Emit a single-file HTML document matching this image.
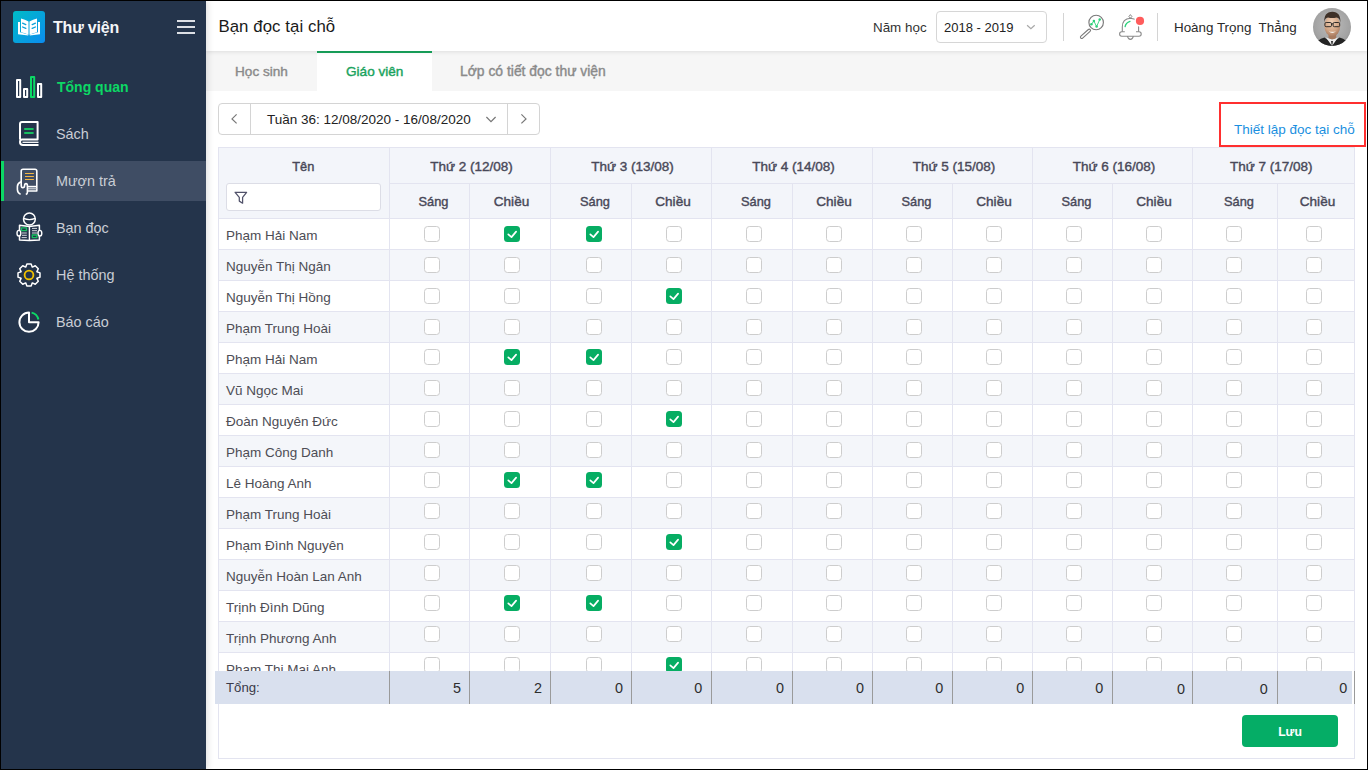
<!DOCTYPE html>
<html><head><meta charset="utf-8"><style>
html,body{margin:0;padding:0;width:1368px;height:770px;overflow:hidden;background:#fff;font-family:"Liberation Sans", sans-serif;}
.t{position:absolute;white-space:nowrap;}
.r{position:absolute;}
.a{position:absolute;overflow:visible;}
</style></head><body>
<div class="r" style="left:0px;top:0px;width:206px;height:770px;background:#24344b;box-shadow:2px 0 6px rgba(0,0,0,0.12);z-index:2;"></div><div style="position:absolute;left:0;top:0;width:206px;height:770px;z-index:3"><svg class="a" style="left:13px;top:11px" width="32" height="32" viewBox="0 0 32 32">
<defs><linearGradient id="lg" x1="0" y1="0" x2="1" y2="1"><stop offset="0" stop-color="#00bcc6"/><stop offset="1" stop-color="#0b8cf0"/></linearGradient></defs>
<rect width="32" height="32" rx="3" fill="url(#lg)"/>
<path d="M5 11 H7 V21.3 L15.2 23.6 V24.6 L5 23.2 Z" fill="#fff"/>
<path d="M27 11 H25 V21.3 L16.8 23.6 V24.6 L27 23.2 Z" fill="#fff"/>
<path d="M8 7.6 Q12 8.4 15.5 10.6 V23.8 Q12 21.8 8 21.2 Z" fill="#fff"/>
<path d="M24 7.6 Q20 8.4 16.5 10.6 V23.8 Q20 21.8 24 21.2 Z" fill="#fff"/>
<path d="M9.6 12.2 L12.8 13.6 M9.6 16 L12.8 17.4 M22.4 12.2 L19.2 13.6 M22.4 16 L19.2 17.4" stroke="#0aa0d8" stroke-width="1.3" stroke-linecap="round"/>
</svg><div class="t" style="top:20.00px;font-size:16px;line-height:16px;font-weight:700;color:#f4f6f8;letter-spacing:-0.2px;left:53px;">Thư viện</div><div class="r" style="left:177px;top:20px;width:18px;height:2px;background:#dcdfe4;"></div><div class="r" style="left:177px;top:26px;width:18px;height:2px;background:#dcdfe4;"></div><div class="r" style="left:177px;top:32px;width:18px;height:2px;background:#dcdfe4;"></div><div class="r" style="left:1px;top:161px;width:205px;height:40px;background:#3f4d64;"></div><div class="r" style="left:1px;top:161px;width:3px;height:40px;background:#0cd865;"></div><svg class="a" style="left:0;top:60px" width="60" height="290" viewBox="0 60 60 290" fill="none" stroke-linejoin="round">
<!-- chart -->
<rect x="17" y="80" width="3.2" height="17" stroke="#fff" stroke-width="2"/>
<rect x="24" y="89" width="3.2" height="8" stroke="#fff" stroke-width="2"/>
<rect x="31" y="77" width="3.2" height="20" stroke="#0cd865" stroke-width="2"/>
<rect x="38" y="84" width="3.2" height="13" stroke="#fff" stroke-width="2"/>
<!-- book -->
<path d="M20 139.5 V124 Q20 122 22 122 H37.6 V139.5 H22 Q20 139.5 20 142 Q20 145 23 145 H38.5" stroke="#fff" stroke-width="2"/>
<path d="M22.5 142.3 H38.5" stroke="#fff" stroke-width="1.3"/>
<path d="M24.2 129 H33.6 M24.2 133 H33.6" stroke="#16c060" stroke-width="2"/>
<!-- borrow -->
<path d="M21.2 185 V171 Q21.2 169.2 23 169.2 H35 Q36.8 169.2 36.8 171 V191 H27.2" stroke="#fff" stroke-width="1.6"/>
<path d="M27 186.6 H36.8" stroke="#fff" stroke-width="1.6"/>
<path d="M27 188.8 H36.8" stroke="#d8dce2" stroke-width="1.2"/>
<path d="M21.2 185 Q21.2 187.8 22.8 187.8 Q24.6 187.8 24.6 185.6 Q24.6 183.6 26 183.6 Q27.4 183.6 27.4 185.6 V192.4 Q27.4 194 25.8 194.4" stroke="#fff" stroke-width="1.6"/>
<path d="M21 181.8 Q17.4 183.5 17.4 186.5 V189.8 Q17.6 193 20.6 194.4" stroke="#fff" stroke-width="1.6"/>
<path d="M25 173.5 H33.9 M25 176.5 H33.9 M25 179.5 H33.9" stroke="#f2b544" stroke-width="1.2"/>
<!-- reader -->
<circle cx="29.4" cy="219" r="5.9" stroke="#fff" stroke-width="1.5"/>
<path d="M23.6 218.4 Q26.5 219.6 29.4 219.6 Q32.3 219.6 35.2 218.4" stroke="#fff" stroke-width="1.4"/>
<path d="M19.5 225.3 L29.4 226.5 L39.4 225.3 V240 L29.4 240.4 L19.5 240 Z" fill="#24344b" stroke="#fff" stroke-width="1.5"/>
<path d="M29.4 226.5 V240.2" stroke="#fff" stroke-width="1.4"/>
<ellipse cx="18.9" cy="233.2" rx="1.9" ry="2.8" fill="#24344b" stroke="#fff" stroke-width="1.4"/>
<ellipse cx="39.9" cy="233.2" rx="1.9" ry="2.8" fill="#24344b" stroke="#fff" stroke-width="1.4"/>
<rect x="21.5" y="227.8" width="5" height="2.8" stroke="#16c060" stroke-width="1.3"/>
<rect x="32.3" y="235" width="4.6" height="2.6" stroke="#16c060" stroke-width="1.3"/>
<path d="M22 233 H26.8 M22 235.3 H26.8 M21.6 237.6 H26.8 M32 228.4 H37 M32 230.7 H37 M32 233 H37" stroke="#e6e8ec" stroke-width="0.9"/>
<!-- gear -->
<path id="gear" stroke="#fff" stroke-width="1.5" stroke-linejoin="round" d="M25.78 267.03 L26.86 264.01 L31.14 264.01 L32.22 267.03 L32.36 267.08 L35.26 265.71 L38.29 268.74 L36.92 271.64 L36.97 271.78 L39.99 272.86 L39.99 277.14 L36.97 278.22 L36.92 278.36 L38.29 281.26 L35.26 284.29 L32.36 282.92 L32.22 282.97 L31.14 285.99 L26.86 285.99 L25.78 282.97 L25.64 282.92 L22.74 284.29 L19.71 281.26 L21.08 278.36 L21.03 278.22 L18.01 277.14 L18.01 272.86 L21.03 271.78 L21.08 271.64 L19.71 268.74 L22.74 265.71 L25.64 267.08 Z"/>
<circle cx="29" cy="275" r="4.4" stroke="#f2c200" stroke-width="1.8"/>
<!-- pie -->
<path d="M29 312.6 A9.6 9.6 0 1 0 38.6 322.2 H29 Z" stroke="#fff" stroke-width="2"/>
<path d="M31.6 312.6 A9.2 9.2 0 0 1 38.4 319.4" stroke="#0cd865" stroke-width="2"/>
</svg><div class="t" style="top:80.00px;font-size:14px;line-height:14px;font-weight:700;color:#0cd865;left:57px;">Tổng quan</div><div class="t" style="top:127.00px;font-size:14.4px;line-height:14.4px;font-weight:400;color:#c9cdd5;left:56px;">Sách</div><div class="t" style="top:174.00px;font-size:14.4px;line-height:14.4px;font-weight:400;color:#c9cdd5;left:56px;">Mượn trả</div><div class="t" style="top:221.00px;font-size:14.4px;line-height:14.4px;font-weight:400;color:#c9cdd5;left:56px;">Bạn đọc</div><div class="t" style="top:268.00px;font-size:14.4px;line-height:14.4px;font-weight:400;color:#c9cdd5;left:56px;">Hệ thống</div><div class="t" style="top:315.00px;font-size:14.4px;line-height:14.4px;font-weight:400;color:#c9cdd5;left:56px;">Báo cáo</div></div><div class="r" style="left:206px;top:0px;width:1162px;height:51px;background:#ffffff;box-shadow:0 1px 4px rgba(0,0,0,0.10);z-index:1;"></div><div style="position:absolute;left:0;top:0;width:1368px;height:51px;z-index:1"><div class="t" style="top:19.00px;font-size:16.8px;line-height:16.8px;font-weight:400;color:#1a1a1a;letter-spacing:0.08px;left:218.4px;">Bạn đọc tại chỗ</div><div class="t" style="top:21.00px;font-size:13.4px;line-height:13.4px;font-weight:400;color:#333;left:873px;">Năm học</div><div class="r" style="left:936px;top:11px;width:111px;height:32px;background:#fff;box-sizing:border-box;border:1px solid #d6d6d6;border-radius:4px;"></div><div class="t" style="top:21.00px;font-size:13px;line-height:13px;font-weight:400;color:#222;left:944px;">2018 - 2019</div><svg class="a" style="left:1024px;top:22px" width="12" height="10" viewBox="0 0 12 10"><path d="M3.1 3.3 L6.9 6.7 L10.7 3.3" stroke="#a8a8a8" stroke-width="1.2" fill="none"/></svg><div class="r" style="left:1063px;top:13px;width:1px;height:28px;background:#d4d4d4;"></div><div class="r" style="left:1157px;top:13px;width:1px;height:28px;background:#d4d4d4;"></div><svg class="a" style="left:1076px;top:8px" width="30" height="34" viewBox="1076 8 30 34" fill="none">
<circle cx="1096.15" cy="22.46" r="7.25" stroke="#7a7a7a" stroke-width="1.15"/>
<rect x="-6.3" y="-1.3" width="12.6" height="2.6" rx="1.3" transform="translate(1085.5 33.8) rotate(-42)" stroke="#7a7a7a" stroke-width="1.1"/>
<path d="M1091.4 24.3 L1093.9 21 L1096.6 26.6 L1099.7 19.6" stroke="#2fd27c" stroke-width="0.9" stroke-linejoin="round"/>
<circle cx="1091.4" cy="24.3" r="1.25" fill="#2bd078"/><circle cx="1093.9" cy="21" r="1.25" fill="#2bd078"/><circle cx="1096.6" cy="26.6" r="1.25" fill="#2bd078"/><circle cx="1099.7" cy="19.6" r="1.25" fill="#2bd078"/>
</svg><svg class="a" style="left:1116px;top:10px" width="32" height="32" viewBox="1116 10 32 32" fill="none" stroke-linejoin="round">
<path d="M1122.3 31.8 V27 Q1122.3 18.6 1130.4 18.2 Q1138.6 18.6 1138.6 27 V31.8" stroke="#8a8a8a" stroke-width="1.1"/>
<path d="M1124.8 31.8 H1121.8 Q1119.6 31.8 1119.6 34 Q1119.6 36.2 1121.8 36.2 H1139 Q1141.2 36.2 1141.2 34 Q1141.2 31.8 1139 31.8 H1136" stroke="#8a8a8a" stroke-width="1.1"/>
<path d="M1127.4 36.2 Q1128.2 39.4 1130.4 39.4 Q1132.6 39.4 1133.4 36.2" stroke="#8a8a8a" stroke-width="1.1"/>
<path d="M1128.9 16.6 L1130.4 14.6 L1131.9 16.6 L1130.4 18.2 Z" stroke="#8a8a8a" stroke-width="1"/>
<path d="M1125.1 26.6 Q1125.8 22.6 1130 21.3" stroke="#2ad07a" stroke-width="1.3" stroke-linecap="round"/>
<circle cx="1140" cy="20.9" r="5.8" fill="#fff"/>
<circle cx="1140" cy="20.9" r="4.1" fill="#ff5c5c"/>
</svg><div class="t" style="top:21.00px;font-size:13.4px;line-height:13.4px;font-weight:400;color:#2a2a2a;left:1174px;">Hoàng Trọng&nbsp; Thẳng</div><svg class="a" style="left:1312px;top:7px" width="40" height="40" viewBox="0 0 40 40">
<defs><radialGradient id="ag" cx="0.5" cy="0.45" r="0.6"><stop offset="0" stop-color="#bdbdbd"/><stop offset="0.75" stop-color="#a2a2a2"/><stop offset="1" stop-color="#858585"/></radialGradient>
<radialGradient id="fg" cx="0.45" cy="0.3" r="0.75"><stop offset="0" stop-color="#f0cfb5"/><stop offset="0.6" stop-color="#d2a585"/><stop offset="1" stop-color="#9e7259"/></radialGradient>
<clipPath id="ac"><circle cx="20" cy="20" r="19"/></clipPath></defs>
<g clip-path="url(#ac)">
<rect width="40" height="40" fill="url(#ag)"/>
<path d="M2 40 Q4 33 12.5 30.6 L20 36 L27.5 30.6 Q36 33 38 40 Z" fill="#242424"/>
<path d="M14 30.4 L20 39 L26 30.4 L20 32.5 Z" fill="#eeeeee"/>
<path d="M19 34 L20 40 L21 34 Z" fill="#2a2a2a"/>
<path d="M16.5 25 H24.2 V31 Q20.3 33.5 16.5 31 Z" fill="#a77a5e"/>
<ellipse cx="20.3" cy="19" rx="7.9" ry="10.6" fill="url(#fg)"/>
<path d="M12.2 16 Q11.6 4.8 20.3 4.7 Q29 4.8 28.4 16 Q28 11 24.5 10.6 Q20.3 11.6 16 10.6 Q12.6 11 12.2 16 Z" fill="#3f3128"/>
<rect x="12.9" y="15.5" width="6.6" height="4.2" rx="1.3" fill="none" stroke="#1e1e1e" stroke-width="0.9"/>
<rect x="21.1" y="15.5" width="6.6" height="4.2" rx="1.3" fill="none" stroke="#1e1e1e" stroke-width="0.9"/>
<path d="M19.5 16.8 H21.1" stroke="#1e1e1e" stroke-width="0.8"/>
<path d="M16.6 24.2 Q20.3 27.6 24 24.2 Q20.3 25.4 16.6 24.2 Z" fill="#f6f2ec"/>
</g></svg></div><div class="r" style="left:206px;top:51px;width:1162px;height:40px;background:#f6f6f6;"></div><div class="r" style="left:317px;top:51px;width:115px;height:40px;background:#ffffff;"></div><div class="r" style="left:317px;top:51px;width:115px;height:2px;background:#17a45c;"></div><div class="t" style="top:65.00px;font-size:13.6px;line-height:13.6px;font-weight:400;color:#8a8a8a;-webkit-text-stroke:0.4px #8a8a8a;left:235px;">Học sinh</div><div class="t" style="top:65.00px;font-size:13.6px;line-height:13.6px;font-weight:400;color:#19a35d;-webkit-text-stroke:0.4px #19a35d;left:346px;">Giáo viên</div><div class="t" style="top:65.00px;font-size:13.9px;line-height:13.9px;font-weight:400;color:#8a8a8a;-webkit-text-stroke:0.4px #8a8a8a;left:460px;">Lớp có tiết đọc thư viện</div><div class="r" style="left:218px;top:103px;width:322px;height:32px;background:#fff;box-sizing:border-box;border:1px solid #d4d4d4;border-radius:4px;"></div><div class="r" style="left:250px;top:103px;width:1px;height:32px;background:#d4d4d4;"></div><div class="r" style="left:507px;top:103px;width:1px;height:32px;background:#d4d4d4;"></div><div class="t" style="top:113.00px;font-size:13.5px;line-height:13.5px;font-weight:400;color:#222;left:267px;">Tuần 36: 12/08/2020 - 16/08/2020</div><svg class="a" style="left:226px;top:110px" width="300" height="18" viewBox="226 110 300 18" fill="none" stroke-width="1.2">
<path d="M236.6 114.4 L232 118.9 L236.6 123.4" stroke="#777"/>
<path d="M521.4 114.4 L526 118.9 L521.4 123.4" stroke="#777"/>
<path d="M486.4 117 L491 121.6 L495.6 117" stroke="#777"/>
</svg><div class="r" style="left:1219px;top:102px;width:147px;height:45px;background:transparent;box-sizing:border-box;border:2px solid #ff2f2f;"></div><div class="t" style="top:123.00px;font-size:13.5px;line-height:13.5px;font-weight:400;color:#1a8fe0;left:1234px;">Thiết lập đọc tại chỗ</div><div class="r" style="left:218px;top:147px;width:1137px;height:612px;background:#fff;box-sizing:border-box;border:1px solid #e3e4f0;"></div><div class="r" style="left:219px;top:148px;width:1135px;height:70px;background:#f3f5fa;"></div><div style="position:absolute;left:0;top:219px;width:1368px;height:452px;overflow:hidden"><div class="r" style="left:219px;top:30px;width:1135px;height:1px;background:#e3e4f0;"></div><div class="t" style="top:10.00px;font-size:13.5px;line-height:13.5px;font-weight:400;color:#4d4d55;left:226px;">Phạm Hải Nam</div><div class="r" style="left:424px;top:7px;width:16px;height:16px;box-sizing:border-box;border:1px solid #cdcdcd;border-radius:3.5px;background:#fff"></div><svg class="a" style="left:504px;top:7px" width="16" height="16" viewBox="0 0 16 16"><rect width="16" height="16" rx="3.5" fill="#06ad63"/><path d="M4.3 8.3 L7.5 11.1 L12.1 5.6" stroke="#fff" stroke-width="1.7" fill="none" stroke-linecap="round" stroke-linejoin="round"/></svg><svg class="a" style="left:586px;top:7px" width="16" height="16" viewBox="0 0 16 16"><rect width="16" height="16" rx="3.5" fill="#06ad63"/><path d="M4.3 8.3 L7.5 11.1 L12.1 5.6" stroke="#fff" stroke-width="1.7" fill="none" stroke-linecap="round" stroke-linejoin="round"/></svg><div class="r" style="left:666px;top:7px;width:16px;height:16px;box-sizing:border-box;border:1px solid #cdcdcd;border-radius:3.5px;background:#fff"></div><div class="r" style="left:746px;top:7px;width:16px;height:16px;box-sizing:border-box;border:1px solid #cdcdcd;border-radius:3.5px;background:#fff"></div><div class="r" style="left:826px;top:7px;width:16px;height:16px;box-sizing:border-box;border:1px solid #cdcdcd;border-radius:3.5px;background:#fff"></div><div class="r" style="left:906px;top:7px;width:16px;height:16px;box-sizing:border-box;border:1px solid #cdcdcd;border-radius:3.5px;background:#fff"></div><div class="r" style="left:986px;top:7px;width:16px;height:16px;box-sizing:border-box;border:1px solid #cdcdcd;border-radius:3.5px;background:#fff"></div><div class="r" style="left:1066px;top:7px;width:16px;height:16px;box-sizing:border-box;border:1px solid #cdcdcd;border-radius:3.5px;background:#fff"></div><div class="r" style="left:1146px;top:7px;width:16px;height:16px;box-sizing:border-box;border:1px solid #cdcdcd;border-radius:3.5px;background:#fff"></div><div class="r" style="left:1226px;top:7px;width:16px;height:16px;box-sizing:border-box;border:1px solid #cdcdcd;border-radius:3.5px;background:#fff"></div><div class="r" style="left:1306px;top:7px;width:16px;height:16px;box-sizing:border-box;border:1px solid #cdcdcd;border-radius:3.5px;background:#fff"></div><div class="r" style="left:219px;top:31px;width:1135px;height:30px;background:#f4f6fa;"></div><div class="r" style="left:219px;top:61px;width:1135px;height:1px;background:#e3e4f0;"></div><div class="t" style="top:41.00px;font-size:13.5px;line-height:13.5px;font-weight:400;color:#4d4d55;left:226px;">Nguyễn Thị Ngân</div><div class="r" style="left:424px;top:38px;width:16px;height:16px;box-sizing:border-box;border:1px solid #cdcdcd;border-radius:3.5px;background:#fff"></div><div class="r" style="left:504px;top:38px;width:16px;height:16px;box-sizing:border-box;border:1px solid #cdcdcd;border-radius:3.5px;background:#fff"></div><div class="r" style="left:586px;top:38px;width:16px;height:16px;box-sizing:border-box;border:1px solid #cdcdcd;border-radius:3.5px;background:#fff"></div><div class="r" style="left:666px;top:38px;width:16px;height:16px;box-sizing:border-box;border:1px solid #cdcdcd;border-radius:3.5px;background:#fff"></div><div class="r" style="left:746px;top:38px;width:16px;height:16px;box-sizing:border-box;border:1px solid #cdcdcd;border-radius:3.5px;background:#fff"></div><div class="r" style="left:826px;top:38px;width:16px;height:16px;box-sizing:border-box;border:1px solid #cdcdcd;border-radius:3.5px;background:#fff"></div><div class="r" style="left:906px;top:38px;width:16px;height:16px;box-sizing:border-box;border:1px solid #cdcdcd;border-radius:3.5px;background:#fff"></div><div class="r" style="left:986px;top:38px;width:16px;height:16px;box-sizing:border-box;border:1px solid #cdcdcd;border-radius:3.5px;background:#fff"></div><div class="r" style="left:1066px;top:38px;width:16px;height:16px;box-sizing:border-box;border:1px solid #cdcdcd;border-radius:3.5px;background:#fff"></div><div class="r" style="left:1146px;top:38px;width:16px;height:16px;box-sizing:border-box;border:1px solid #cdcdcd;border-radius:3.5px;background:#fff"></div><div class="r" style="left:1226px;top:38px;width:16px;height:16px;box-sizing:border-box;border:1px solid #cdcdcd;border-radius:3.5px;background:#fff"></div><div class="r" style="left:1306px;top:38px;width:16px;height:16px;box-sizing:border-box;border:1px solid #cdcdcd;border-radius:3.5px;background:#fff"></div><div class="r" style="left:219px;top:92px;width:1135px;height:1px;background:#e3e4f0;"></div><div class="t" style="top:72.00px;font-size:13.5px;line-height:13.5px;font-weight:400;color:#4d4d55;left:226px;">Nguyễn Thị Hồng</div><div class="r" style="left:424px;top:69px;width:16px;height:16px;box-sizing:border-box;border:1px solid #cdcdcd;border-radius:3.5px;background:#fff"></div><div class="r" style="left:504px;top:69px;width:16px;height:16px;box-sizing:border-box;border:1px solid #cdcdcd;border-radius:3.5px;background:#fff"></div><div class="r" style="left:586px;top:69px;width:16px;height:16px;box-sizing:border-box;border:1px solid #cdcdcd;border-radius:3.5px;background:#fff"></div><svg class="a" style="left:666px;top:69px" width="16" height="16" viewBox="0 0 16 16"><rect width="16" height="16" rx="3.5" fill="#06ad63"/><path d="M4.3 8.3 L7.5 11.1 L12.1 5.6" stroke="#fff" stroke-width="1.7" fill="none" stroke-linecap="round" stroke-linejoin="round"/></svg><div class="r" style="left:746px;top:69px;width:16px;height:16px;box-sizing:border-box;border:1px solid #cdcdcd;border-radius:3.5px;background:#fff"></div><div class="r" style="left:826px;top:69px;width:16px;height:16px;box-sizing:border-box;border:1px solid #cdcdcd;border-radius:3.5px;background:#fff"></div><div class="r" style="left:906px;top:69px;width:16px;height:16px;box-sizing:border-box;border:1px solid #cdcdcd;border-radius:3.5px;background:#fff"></div><div class="r" style="left:986px;top:69px;width:16px;height:16px;box-sizing:border-box;border:1px solid #cdcdcd;border-radius:3.5px;background:#fff"></div><div class="r" style="left:1066px;top:69px;width:16px;height:16px;box-sizing:border-box;border:1px solid #cdcdcd;border-radius:3.5px;background:#fff"></div><div class="r" style="left:1146px;top:69px;width:16px;height:16px;box-sizing:border-box;border:1px solid #cdcdcd;border-radius:3.5px;background:#fff"></div><div class="r" style="left:1226px;top:69px;width:16px;height:16px;box-sizing:border-box;border:1px solid #cdcdcd;border-radius:3.5px;background:#fff"></div><div class="r" style="left:1306px;top:69px;width:16px;height:16px;box-sizing:border-box;border:1px solid #cdcdcd;border-radius:3.5px;background:#fff"></div><div class="r" style="left:219px;top:93px;width:1135px;height:30px;background:#f4f6fa;"></div><div class="r" style="left:219px;top:123px;width:1135px;height:1px;background:#e3e4f0;"></div><div class="t" style="top:103.00px;font-size:13.5px;line-height:13.5px;font-weight:400;color:#4d4d55;left:226px;">Phạm Trung Hoài</div><div class="r" style="left:424px;top:100px;width:16px;height:16px;box-sizing:border-box;border:1px solid #cdcdcd;border-radius:3.5px;background:#fff"></div><div class="r" style="left:504px;top:100px;width:16px;height:16px;box-sizing:border-box;border:1px solid #cdcdcd;border-radius:3.5px;background:#fff"></div><div class="r" style="left:586px;top:100px;width:16px;height:16px;box-sizing:border-box;border:1px solid #cdcdcd;border-radius:3.5px;background:#fff"></div><div class="r" style="left:666px;top:100px;width:16px;height:16px;box-sizing:border-box;border:1px solid #cdcdcd;border-radius:3.5px;background:#fff"></div><div class="r" style="left:746px;top:100px;width:16px;height:16px;box-sizing:border-box;border:1px solid #cdcdcd;border-radius:3.5px;background:#fff"></div><div class="r" style="left:826px;top:100px;width:16px;height:16px;box-sizing:border-box;border:1px solid #cdcdcd;border-radius:3.5px;background:#fff"></div><div class="r" style="left:906px;top:100px;width:16px;height:16px;box-sizing:border-box;border:1px solid #cdcdcd;border-radius:3.5px;background:#fff"></div><div class="r" style="left:986px;top:100px;width:16px;height:16px;box-sizing:border-box;border:1px solid #cdcdcd;border-radius:3.5px;background:#fff"></div><div class="r" style="left:1066px;top:100px;width:16px;height:16px;box-sizing:border-box;border:1px solid #cdcdcd;border-radius:3.5px;background:#fff"></div><div class="r" style="left:1146px;top:100px;width:16px;height:16px;box-sizing:border-box;border:1px solid #cdcdcd;border-radius:3.5px;background:#fff"></div><div class="r" style="left:1226px;top:100px;width:16px;height:16px;box-sizing:border-box;border:1px solid #cdcdcd;border-radius:3.5px;background:#fff"></div><div class="r" style="left:1306px;top:100px;width:16px;height:16px;box-sizing:border-box;border:1px solid #cdcdcd;border-radius:3.5px;background:#fff"></div><div class="r" style="left:219px;top:154px;width:1135px;height:1px;background:#e3e4f0;"></div><div class="t" style="top:134.00px;font-size:13.5px;line-height:13.5px;font-weight:400;color:#4d4d55;left:226px;">Phạm Hải Nam</div><div class="r" style="left:424px;top:130px;width:16px;height:16px;box-sizing:border-box;border:1px solid #cdcdcd;border-radius:3.5px;background:#fff"></div><svg class="a" style="left:504px;top:130px" width="16" height="16" viewBox="0 0 16 16"><rect width="16" height="16" rx="3.5" fill="#06ad63"/><path d="M4.3 8.3 L7.5 11.1 L12.1 5.6" stroke="#fff" stroke-width="1.7" fill="none" stroke-linecap="round" stroke-linejoin="round"/></svg><svg class="a" style="left:586px;top:130px" width="16" height="16" viewBox="0 0 16 16"><rect width="16" height="16" rx="3.5" fill="#06ad63"/><path d="M4.3 8.3 L7.5 11.1 L12.1 5.6" stroke="#fff" stroke-width="1.7" fill="none" stroke-linecap="round" stroke-linejoin="round"/></svg><div class="r" style="left:666px;top:130px;width:16px;height:16px;box-sizing:border-box;border:1px solid #cdcdcd;border-radius:3.5px;background:#fff"></div><div class="r" style="left:746px;top:130px;width:16px;height:16px;box-sizing:border-box;border:1px solid #cdcdcd;border-radius:3.5px;background:#fff"></div><div class="r" style="left:826px;top:130px;width:16px;height:16px;box-sizing:border-box;border:1px solid #cdcdcd;border-radius:3.5px;background:#fff"></div><div class="r" style="left:906px;top:130px;width:16px;height:16px;box-sizing:border-box;border:1px solid #cdcdcd;border-radius:3.5px;background:#fff"></div><div class="r" style="left:986px;top:130px;width:16px;height:16px;box-sizing:border-box;border:1px solid #cdcdcd;border-radius:3.5px;background:#fff"></div><div class="r" style="left:1066px;top:130px;width:16px;height:16px;box-sizing:border-box;border:1px solid #cdcdcd;border-radius:3.5px;background:#fff"></div><div class="r" style="left:1146px;top:130px;width:16px;height:16px;box-sizing:border-box;border:1px solid #cdcdcd;border-radius:3.5px;background:#fff"></div><div class="r" style="left:1226px;top:130px;width:16px;height:16px;box-sizing:border-box;border:1px solid #cdcdcd;border-radius:3.5px;background:#fff"></div><div class="r" style="left:1306px;top:130px;width:16px;height:16px;box-sizing:border-box;border:1px solid #cdcdcd;border-radius:3.5px;background:#fff"></div><div class="r" style="left:219px;top:155px;width:1135px;height:30px;background:#f4f6fa;"></div><div class="r" style="left:219px;top:185px;width:1135px;height:1px;background:#e3e4f0;"></div><div class="t" style="top:165.00px;font-size:13.5px;line-height:13.5px;font-weight:400;color:#4d4d55;left:226px;">Vũ Ngọc Mai</div><div class="r" style="left:424px;top:161px;width:16px;height:16px;box-sizing:border-box;border:1px solid #cdcdcd;border-radius:3.5px;background:#fff"></div><div class="r" style="left:504px;top:161px;width:16px;height:16px;box-sizing:border-box;border:1px solid #cdcdcd;border-radius:3.5px;background:#fff"></div><div class="r" style="left:586px;top:161px;width:16px;height:16px;box-sizing:border-box;border:1px solid #cdcdcd;border-radius:3.5px;background:#fff"></div><div class="r" style="left:666px;top:161px;width:16px;height:16px;box-sizing:border-box;border:1px solid #cdcdcd;border-radius:3.5px;background:#fff"></div><div class="r" style="left:746px;top:161px;width:16px;height:16px;box-sizing:border-box;border:1px solid #cdcdcd;border-radius:3.5px;background:#fff"></div><div class="r" style="left:826px;top:161px;width:16px;height:16px;box-sizing:border-box;border:1px solid #cdcdcd;border-radius:3.5px;background:#fff"></div><div class="r" style="left:906px;top:161px;width:16px;height:16px;box-sizing:border-box;border:1px solid #cdcdcd;border-radius:3.5px;background:#fff"></div><div class="r" style="left:986px;top:161px;width:16px;height:16px;box-sizing:border-box;border:1px solid #cdcdcd;border-radius:3.5px;background:#fff"></div><div class="r" style="left:1066px;top:161px;width:16px;height:16px;box-sizing:border-box;border:1px solid #cdcdcd;border-radius:3.5px;background:#fff"></div><div class="r" style="left:1146px;top:161px;width:16px;height:16px;box-sizing:border-box;border:1px solid #cdcdcd;border-radius:3.5px;background:#fff"></div><div class="r" style="left:1226px;top:161px;width:16px;height:16px;box-sizing:border-box;border:1px solid #cdcdcd;border-radius:3.5px;background:#fff"></div><div class="r" style="left:1306px;top:161px;width:16px;height:16px;box-sizing:border-box;border:1px solid #cdcdcd;border-radius:3.5px;background:#fff"></div><div class="r" style="left:219px;top:216px;width:1135px;height:1px;background:#e3e4f0;"></div><div class="t" style="top:196.00px;font-size:13.5px;line-height:13.5px;font-weight:400;color:#4d4d55;left:226px;">Đoàn Nguyên Đức</div><div class="r" style="left:424px;top:192px;width:16px;height:16px;box-sizing:border-box;border:1px solid #cdcdcd;border-radius:3.5px;background:#fff"></div><div class="r" style="left:504px;top:192px;width:16px;height:16px;box-sizing:border-box;border:1px solid #cdcdcd;border-radius:3.5px;background:#fff"></div><div class="r" style="left:586px;top:192px;width:16px;height:16px;box-sizing:border-box;border:1px solid #cdcdcd;border-radius:3.5px;background:#fff"></div><svg class="a" style="left:666px;top:192px" width="16" height="16" viewBox="0 0 16 16"><rect width="16" height="16" rx="3.5" fill="#06ad63"/><path d="M4.3 8.3 L7.5 11.1 L12.1 5.6" stroke="#fff" stroke-width="1.7" fill="none" stroke-linecap="round" stroke-linejoin="round"/></svg><div class="r" style="left:746px;top:192px;width:16px;height:16px;box-sizing:border-box;border:1px solid #cdcdcd;border-radius:3.5px;background:#fff"></div><div class="r" style="left:826px;top:192px;width:16px;height:16px;box-sizing:border-box;border:1px solid #cdcdcd;border-radius:3.5px;background:#fff"></div><div class="r" style="left:906px;top:192px;width:16px;height:16px;box-sizing:border-box;border:1px solid #cdcdcd;border-radius:3.5px;background:#fff"></div><div class="r" style="left:986px;top:192px;width:16px;height:16px;box-sizing:border-box;border:1px solid #cdcdcd;border-radius:3.5px;background:#fff"></div><div class="r" style="left:1066px;top:192px;width:16px;height:16px;box-sizing:border-box;border:1px solid #cdcdcd;border-radius:3.5px;background:#fff"></div><div class="r" style="left:1146px;top:192px;width:16px;height:16px;box-sizing:border-box;border:1px solid #cdcdcd;border-radius:3.5px;background:#fff"></div><div class="r" style="left:1226px;top:192px;width:16px;height:16px;box-sizing:border-box;border:1px solid #cdcdcd;border-radius:3.5px;background:#fff"></div><div class="r" style="left:1306px;top:192px;width:16px;height:16px;box-sizing:border-box;border:1px solid #cdcdcd;border-radius:3.5px;background:#fff"></div><div class="r" style="left:219px;top:217px;width:1135px;height:30px;background:#f4f6fa;"></div><div class="r" style="left:219px;top:247px;width:1135px;height:1px;background:#e3e4f0;"></div><div class="t" style="top:227.00px;font-size:13.5px;line-height:13.5px;font-weight:400;color:#4d4d55;left:226px;">Phạm Công Danh</div><div class="r" style="left:424px;top:223px;width:16px;height:16px;box-sizing:border-box;border:1px solid #cdcdcd;border-radius:3.5px;background:#fff"></div><div class="r" style="left:504px;top:223px;width:16px;height:16px;box-sizing:border-box;border:1px solid #cdcdcd;border-radius:3.5px;background:#fff"></div><div class="r" style="left:586px;top:223px;width:16px;height:16px;box-sizing:border-box;border:1px solid #cdcdcd;border-radius:3.5px;background:#fff"></div><div class="r" style="left:666px;top:223px;width:16px;height:16px;box-sizing:border-box;border:1px solid #cdcdcd;border-radius:3.5px;background:#fff"></div><div class="r" style="left:746px;top:223px;width:16px;height:16px;box-sizing:border-box;border:1px solid #cdcdcd;border-radius:3.5px;background:#fff"></div><div class="r" style="left:826px;top:223px;width:16px;height:16px;box-sizing:border-box;border:1px solid #cdcdcd;border-radius:3.5px;background:#fff"></div><div class="r" style="left:906px;top:223px;width:16px;height:16px;box-sizing:border-box;border:1px solid #cdcdcd;border-radius:3.5px;background:#fff"></div><div class="r" style="left:986px;top:223px;width:16px;height:16px;box-sizing:border-box;border:1px solid #cdcdcd;border-radius:3.5px;background:#fff"></div><div class="r" style="left:1066px;top:223px;width:16px;height:16px;box-sizing:border-box;border:1px solid #cdcdcd;border-radius:3.5px;background:#fff"></div><div class="r" style="left:1146px;top:223px;width:16px;height:16px;box-sizing:border-box;border:1px solid #cdcdcd;border-radius:3.5px;background:#fff"></div><div class="r" style="left:1226px;top:223px;width:16px;height:16px;box-sizing:border-box;border:1px solid #cdcdcd;border-radius:3.5px;background:#fff"></div><div class="r" style="left:1306px;top:223px;width:16px;height:16px;box-sizing:border-box;border:1px solid #cdcdcd;border-radius:3.5px;background:#fff"></div><div class="r" style="left:219px;top:278px;width:1135px;height:1px;background:#e3e4f0;"></div><div class="t" style="top:258.00px;font-size:13.5px;line-height:13.5px;font-weight:400;color:#4d4d55;left:226px;">Lê Hoàng Anh</div><div class="r" style="left:424px;top:253px;width:16px;height:16px;box-sizing:border-box;border:1px solid #cdcdcd;border-radius:3.5px;background:#fff"></div><svg class="a" style="left:504px;top:253px" width="16" height="16" viewBox="0 0 16 16"><rect width="16" height="16" rx="3.5" fill="#06ad63"/><path d="M4.3 8.3 L7.5 11.1 L12.1 5.6" stroke="#fff" stroke-width="1.7" fill="none" stroke-linecap="round" stroke-linejoin="round"/></svg><svg class="a" style="left:586px;top:253px" width="16" height="16" viewBox="0 0 16 16"><rect width="16" height="16" rx="3.5" fill="#06ad63"/><path d="M4.3 8.3 L7.5 11.1 L12.1 5.6" stroke="#fff" stroke-width="1.7" fill="none" stroke-linecap="round" stroke-linejoin="round"/></svg><div class="r" style="left:666px;top:253px;width:16px;height:16px;box-sizing:border-box;border:1px solid #cdcdcd;border-radius:3.5px;background:#fff"></div><div class="r" style="left:746px;top:253px;width:16px;height:16px;box-sizing:border-box;border:1px solid #cdcdcd;border-radius:3.5px;background:#fff"></div><div class="r" style="left:826px;top:253px;width:16px;height:16px;box-sizing:border-box;border:1px solid #cdcdcd;border-radius:3.5px;background:#fff"></div><div class="r" style="left:906px;top:253px;width:16px;height:16px;box-sizing:border-box;border:1px solid #cdcdcd;border-radius:3.5px;background:#fff"></div><div class="r" style="left:986px;top:253px;width:16px;height:16px;box-sizing:border-box;border:1px solid #cdcdcd;border-radius:3.5px;background:#fff"></div><div class="r" style="left:1066px;top:253px;width:16px;height:16px;box-sizing:border-box;border:1px solid #cdcdcd;border-radius:3.5px;background:#fff"></div><div class="r" style="left:1146px;top:253px;width:16px;height:16px;box-sizing:border-box;border:1px solid #cdcdcd;border-radius:3.5px;background:#fff"></div><div class="r" style="left:1226px;top:253px;width:16px;height:16px;box-sizing:border-box;border:1px solid #cdcdcd;border-radius:3.5px;background:#fff"></div><div class="r" style="left:1306px;top:253px;width:16px;height:16px;box-sizing:border-box;border:1px solid #cdcdcd;border-radius:3.5px;background:#fff"></div><div class="r" style="left:219px;top:279px;width:1135px;height:30px;background:#f4f6fa;"></div><div class="r" style="left:219px;top:309px;width:1135px;height:1px;background:#e3e4f0;"></div><div class="t" style="top:289.00px;font-size:13.5px;line-height:13.5px;font-weight:400;color:#4d4d55;left:226px;">Phạm Trung Hoài</div><div class="r" style="left:424px;top:284px;width:16px;height:16px;box-sizing:border-box;border:1px solid #cdcdcd;border-radius:3.5px;background:#fff"></div><div class="r" style="left:504px;top:284px;width:16px;height:16px;box-sizing:border-box;border:1px solid #cdcdcd;border-radius:3.5px;background:#fff"></div><div class="r" style="left:586px;top:284px;width:16px;height:16px;box-sizing:border-box;border:1px solid #cdcdcd;border-radius:3.5px;background:#fff"></div><div class="r" style="left:666px;top:284px;width:16px;height:16px;box-sizing:border-box;border:1px solid #cdcdcd;border-radius:3.5px;background:#fff"></div><div class="r" style="left:746px;top:284px;width:16px;height:16px;box-sizing:border-box;border:1px solid #cdcdcd;border-radius:3.5px;background:#fff"></div><div class="r" style="left:826px;top:284px;width:16px;height:16px;box-sizing:border-box;border:1px solid #cdcdcd;border-radius:3.5px;background:#fff"></div><div class="r" style="left:906px;top:284px;width:16px;height:16px;box-sizing:border-box;border:1px solid #cdcdcd;border-radius:3.5px;background:#fff"></div><div class="r" style="left:986px;top:284px;width:16px;height:16px;box-sizing:border-box;border:1px solid #cdcdcd;border-radius:3.5px;background:#fff"></div><div class="r" style="left:1066px;top:284px;width:16px;height:16px;box-sizing:border-box;border:1px solid #cdcdcd;border-radius:3.5px;background:#fff"></div><div class="r" style="left:1146px;top:284px;width:16px;height:16px;box-sizing:border-box;border:1px solid #cdcdcd;border-radius:3.5px;background:#fff"></div><div class="r" style="left:1226px;top:284px;width:16px;height:16px;box-sizing:border-box;border:1px solid #cdcdcd;border-radius:3.5px;background:#fff"></div><div class="r" style="left:1306px;top:284px;width:16px;height:16px;box-sizing:border-box;border:1px solid #cdcdcd;border-radius:3.5px;background:#fff"></div><div class="r" style="left:219px;top:340px;width:1135px;height:1px;background:#e3e4f0;"></div><div class="t" style="top:320.00px;font-size:13.5px;line-height:13.5px;font-weight:400;color:#4d4d55;left:226px;">Phạm Đình Nguyên</div><div class="r" style="left:424px;top:315px;width:16px;height:16px;box-sizing:border-box;border:1px solid #cdcdcd;border-radius:3.5px;background:#fff"></div><div class="r" style="left:504px;top:315px;width:16px;height:16px;box-sizing:border-box;border:1px solid #cdcdcd;border-radius:3.5px;background:#fff"></div><div class="r" style="left:586px;top:315px;width:16px;height:16px;box-sizing:border-box;border:1px solid #cdcdcd;border-radius:3.5px;background:#fff"></div><svg class="a" style="left:666px;top:315px" width="16" height="16" viewBox="0 0 16 16"><rect width="16" height="16" rx="3.5" fill="#06ad63"/><path d="M4.3 8.3 L7.5 11.1 L12.1 5.6" stroke="#fff" stroke-width="1.7" fill="none" stroke-linecap="round" stroke-linejoin="round"/></svg><div class="r" style="left:746px;top:315px;width:16px;height:16px;box-sizing:border-box;border:1px solid #cdcdcd;border-radius:3.5px;background:#fff"></div><div class="r" style="left:826px;top:315px;width:16px;height:16px;box-sizing:border-box;border:1px solid #cdcdcd;border-radius:3.5px;background:#fff"></div><div class="r" style="left:906px;top:315px;width:16px;height:16px;box-sizing:border-box;border:1px solid #cdcdcd;border-radius:3.5px;background:#fff"></div><div class="r" style="left:986px;top:315px;width:16px;height:16px;box-sizing:border-box;border:1px solid #cdcdcd;border-radius:3.5px;background:#fff"></div><div class="r" style="left:1066px;top:315px;width:16px;height:16px;box-sizing:border-box;border:1px solid #cdcdcd;border-radius:3.5px;background:#fff"></div><div class="r" style="left:1146px;top:315px;width:16px;height:16px;box-sizing:border-box;border:1px solid #cdcdcd;border-radius:3.5px;background:#fff"></div><div class="r" style="left:1226px;top:315px;width:16px;height:16px;box-sizing:border-box;border:1px solid #cdcdcd;border-radius:3.5px;background:#fff"></div><div class="r" style="left:1306px;top:315px;width:16px;height:16px;box-sizing:border-box;border:1px solid #cdcdcd;border-radius:3.5px;background:#fff"></div><div class="r" style="left:219px;top:341px;width:1135px;height:30px;background:#f4f6fa;"></div><div class="r" style="left:219px;top:371px;width:1135px;height:1px;background:#e3e4f0;"></div><div class="t" style="top:351.00px;font-size:13.5px;line-height:13.5px;font-weight:400;color:#4d4d55;left:226px;">Nguyễn Hoàn Lan Anh</div><div class="r" style="left:424px;top:346px;width:16px;height:16px;box-sizing:border-box;border:1px solid #cdcdcd;border-radius:3.5px;background:#fff"></div><div class="r" style="left:504px;top:346px;width:16px;height:16px;box-sizing:border-box;border:1px solid #cdcdcd;border-radius:3.5px;background:#fff"></div><div class="r" style="left:586px;top:346px;width:16px;height:16px;box-sizing:border-box;border:1px solid #cdcdcd;border-radius:3.5px;background:#fff"></div><div class="r" style="left:666px;top:346px;width:16px;height:16px;box-sizing:border-box;border:1px solid #cdcdcd;border-radius:3.5px;background:#fff"></div><div class="r" style="left:746px;top:346px;width:16px;height:16px;box-sizing:border-box;border:1px solid #cdcdcd;border-radius:3.5px;background:#fff"></div><div class="r" style="left:826px;top:346px;width:16px;height:16px;box-sizing:border-box;border:1px solid #cdcdcd;border-radius:3.5px;background:#fff"></div><div class="r" style="left:906px;top:346px;width:16px;height:16px;box-sizing:border-box;border:1px solid #cdcdcd;border-radius:3.5px;background:#fff"></div><div class="r" style="left:986px;top:346px;width:16px;height:16px;box-sizing:border-box;border:1px solid #cdcdcd;border-radius:3.5px;background:#fff"></div><div class="r" style="left:1066px;top:346px;width:16px;height:16px;box-sizing:border-box;border:1px solid #cdcdcd;border-radius:3.5px;background:#fff"></div><div class="r" style="left:1146px;top:346px;width:16px;height:16px;box-sizing:border-box;border:1px solid #cdcdcd;border-radius:3.5px;background:#fff"></div><div class="r" style="left:1226px;top:346px;width:16px;height:16px;box-sizing:border-box;border:1px solid #cdcdcd;border-radius:3.5px;background:#fff"></div><div class="r" style="left:1306px;top:346px;width:16px;height:16px;box-sizing:border-box;border:1px solid #cdcdcd;border-radius:3.5px;background:#fff"></div><div class="r" style="left:219px;top:402px;width:1135px;height:1px;background:#e3e4f0;"></div><div class="t" style="top:382.00px;font-size:13.5px;line-height:13.5px;font-weight:400;color:#4d4d55;left:226px;">Trịnh Đình Dũng</div><div class="r" style="left:424px;top:376px;width:16px;height:16px;box-sizing:border-box;border:1px solid #cdcdcd;border-radius:3.5px;background:#fff"></div><svg class="a" style="left:504px;top:376px" width="16" height="16" viewBox="0 0 16 16"><rect width="16" height="16" rx="3.5" fill="#06ad63"/><path d="M4.3 8.3 L7.5 11.1 L12.1 5.6" stroke="#fff" stroke-width="1.7" fill="none" stroke-linecap="round" stroke-linejoin="round"/></svg><svg class="a" style="left:586px;top:376px" width="16" height="16" viewBox="0 0 16 16"><rect width="16" height="16" rx="3.5" fill="#06ad63"/><path d="M4.3 8.3 L7.5 11.1 L12.1 5.6" stroke="#fff" stroke-width="1.7" fill="none" stroke-linecap="round" stroke-linejoin="round"/></svg><div class="r" style="left:666px;top:376px;width:16px;height:16px;box-sizing:border-box;border:1px solid #cdcdcd;border-radius:3.5px;background:#fff"></div><div class="r" style="left:746px;top:376px;width:16px;height:16px;box-sizing:border-box;border:1px solid #cdcdcd;border-radius:3.5px;background:#fff"></div><div class="r" style="left:826px;top:376px;width:16px;height:16px;box-sizing:border-box;border:1px solid #cdcdcd;border-radius:3.5px;background:#fff"></div><div class="r" style="left:906px;top:376px;width:16px;height:16px;box-sizing:border-box;border:1px solid #cdcdcd;border-radius:3.5px;background:#fff"></div><div class="r" style="left:986px;top:376px;width:16px;height:16px;box-sizing:border-box;border:1px solid #cdcdcd;border-radius:3.5px;background:#fff"></div><div class="r" style="left:1066px;top:376px;width:16px;height:16px;box-sizing:border-box;border:1px solid #cdcdcd;border-radius:3.5px;background:#fff"></div><div class="r" style="left:1146px;top:376px;width:16px;height:16px;box-sizing:border-box;border:1px solid #cdcdcd;border-radius:3.5px;background:#fff"></div><div class="r" style="left:1226px;top:376px;width:16px;height:16px;box-sizing:border-box;border:1px solid #cdcdcd;border-radius:3.5px;background:#fff"></div><div class="r" style="left:1306px;top:376px;width:16px;height:16px;box-sizing:border-box;border:1px solid #cdcdcd;border-radius:3.5px;background:#fff"></div><div class="r" style="left:219px;top:403px;width:1135px;height:30px;background:#f4f6fa;"></div><div class="r" style="left:219px;top:433px;width:1135px;height:1px;background:#e3e4f0;"></div><div class="t" style="top:413.00px;font-size:13.5px;line-height:13.5px;font-weight:400;color:#4d4d55;left:226px;">Trịnh Phương Anh</div><div class="r" style="left:424px;top:407px;width:16px;height:16px;box-sizing:border-box;border:1px solid #cdcdcd;border-radius:3.5px;background:#fff"></div><div class="r" style="left:504px;top:407px;width:16px;height:16px;box-sizing:border-box;border:1px solid #cdcdcd;border-radius:3.5px;background:#fff"></div><div class="r" style="left:586px;top:407px;width:16px;height:16px;box-sizing:border-box;border:1px solid #cdcdcd;border-radius:3.5px;background:#fff"></div><div class="r" style="left:666px;top:407px;width:16px;height:16px;box-sizing:border-box;border:1px solid #cdcdcd;border-radius:3.5px;background:#fff"></div><div class="r" style="left:746px;top:407px;width:16px;height:16px;box-sizing:border-box;border:1px solid #cdcdcd;border-radius:3.5px;background:#fff"></div><div class="r" style="left:826px;top:407px;width:16px;height:16px;box-sizing:border-box;border:1px solid #cdcdcd;border-radius:3.5px;background:#fff"></div><div class="r" style="left:906px;top:407px;width:16px;height:16px;box-sizing:border-box;border:1px solid #cdcdcd;border-radius:3.5px;background:#fff"></div><div class="r" style="left:986px;top:407px;width:16px;height:16px;box-sizing:border-box;border:1px solid #cdcdcd;border-radius:3.5px;background:#fff"></div><div class="r" style="left:1066px;top:407px;width:16px;height:16px;box-sizing:border-box;border:1px solid #cdcdcd;border-radius:3.5px;background:#fff"></div><div class="r" style="left:1146px;top:407px;width:16px;height:16px;box-sizing:border-box;border:1px solid #cdcdcd;border-radius:3.5px;background:#fff"></div><div class="r" style="left:1226px;top:407px;width:16px;height:16px;box-sizing:border-box;border:1px solid #cdcdcd;border-radius:3.5px;background:#fff"></div><div class="r" style="left:1306px;top:407px;width:16px;height:16px;box-sizing:border-box;border:1px solid #cdcdcd;border-radius:3.5px;background:#fff"></div><div class="r" style="left:219px;top:464px;width:1135px;height:1px;background:#e3e4f0;"></div><div class="t" style="top:444.00px;font-size:13.5px;line-height:13.5px;font-weight:400;color:#4d4d55;left:226px;">Phạm Thị Mai Anh</div><div class="r" style="left:424px;top:438px;width:16px;height:16px;box-sizing:border-box;border:1px solid #cdcdcd;border-radius:3.5px;background:#fff"></div><div class="r" style="left:504px;top:438px;width:16px;height:16px;box-sizing:border-box;border:1px solid #cdcdcd;border-radius:3.5px;background:#fff"></div><div class="r" style="left:586px;top:438px;width:16px;height:16px;box-sizing:border-box;border:1px solid #cdcdcd;border-radius:3.5px;background:#fff"></div><svg class="a" style="left:666px;top:438px" width="16" height="16" viewBox="0 0 16 16"><rect width="16" height="16" rx="3.5" fill="#06ad63"/><path d="M4.3 8.3 L7.5 11.1 L12.1 5.6" stroke="#fff" stroke-width="1.7" fill="none" stroke-linecap="round" stroke-linejoin="round"/></svg><div class="r" style="left:746px;top:438px;width:16px;height:16px;box-sizing:border-box;border:1px solid #cdcdcd;border-radius:3.5px;background:#fff"></div><div class="r" style="left:826px;top:438px;width:16px;height:16px;box-sizing:border-box;border:1px solid #cdcdcd;border-radius:3.5px;background:#fff"></div><div class="r" style="left:906px;top:438px;width:16px;height:16px;box-sizing:border-box;border:1px solid #cdcdcd;border-radius:3.5px;background:#fff"></div><div class="r" style="left:986px;top:438px;width:16px;height:16px;box-sizing:border-box;border:1px solid #cdcdcd;border-radius:3.5px;background:#fff"></div><div class="r" style="left:1066px;top:438px;width:16px;height:16px;box-sizing:border-box;border:1px solid #cdcdcd;border-radius:3.5px;background:#fff"></div><div class="r" style="left:1146px;top:438px;width:16px;height:16px;box-sizing:border-box;border:1px solid #cdcdcd;border-radius:3.5px;background:#fff"></div><div class="r" style="left:1226px;top:438px;width:16px;height:16px;box-sizing:border-box;border:1px solid #cdcdcd;border-radius:3.5px;background:#fff"></div><div class="r" style="left:1306px;top:438px;width:16px;height:16px;box-sizing:border-box;border:1px solid #cdcdcd;border-radius:3.5px;background:#fff"></div><div class="r" style="left:389px;top:0px;width:1px;height:452px;background:#e3e4f0;"></div><div class="r" style="left:469px;top:0px;width:1px;height:452px;background:#e3e4f0;"></div><div class="r" style="left:550px;top:0px;width:1px;height:452px;background:#e3e4f0;"></div><div class="r" style="left:631px;top:0px;width:1px;height:452px;background:#e3e4f0;"></div><div class="r" style="left:711px;top:0px;width:1px;height:452px;background:#e3e4f0;"></div><div class="r" style="left:792px;top:0px;width:1px;height:452px;background:#e3e4f0;"></div><div class="r" style="left:872px;top:0px;width:1px;height:452px;background:#e3e4f0;"></div><div class="r" style="left:952px;top:0px;width:1px;height:452px;background:#e3e4f0;"></div><div class="r" style="left:1032px;top:0px;width:1px;height:452px;background:#e3e4f0;"></div><div class="r" style="left:1112px;top:0px;width:1px;height:452px;background:#e3e4f0;"></div><div class="r" style="left:1192px;top:0px;width:1px;height:452px;background:#e3e4f0;"></div><div class="r" style="left:1277px;top:0px;width:1px;height:452px;background:#e3e4f0;"></div></div><div class="r" style="left:389px;top:183px;width:965px;height:1px;background:#e3e4f0;"></div><div class="r" style="left:219px;top:218px;width:1135px;height:1px;background:#e3e4f0;"></div><div class="r" style="left:389px;top:148px;width:1px;height:71px;background:#e3e4f0;"></div><div class="r" style="left:469px;top:183px;width:1px;height:36px;background:#e3e4f0;"></div><div class="r" style="left:550px;top:148px;width:1px;height:71px;background:#e3e4f0;"></div><div class="r" style="left:631px;top:183px;width:1px;height:36px;background:#e3e4f0;"></div><div class="r" style="left:711px;top:148px;width:1px;height:71px;background:#e3e4f0;"></div><div class="r" style="left:792px;top:183px;width:1px;height:36px;background:#e3e4f0;"></div><div class="r" style="left:872px;top:148px;width:1px;height:71px;background:#e3e4f0;"></div><div class="r" style="left:952px;top:183px;width:1px;height:36px;background:#e3e4f0;"></div><div class="r" style="left:1032px;top:148px;width:1px;height:71px;background:#e3e4f0;"></div><div class="r" style="left:1112px;top:183px;width:1px;height:36px;background:#e3e4f0;"></div><div class="r" style="left:1192px;top:148px;width:1px;height:71px;background:#e3e4f0;"></div><div class="r" style="left:1277px;top:183px;width:1px;height:36px;background:#e3e4f0;"></div><div class="t" style="top:161.00px;font-size:12.8px;line-height:12.8px;font-weight:400;color:#484858;-webkit-text-stroke:0.4px #484858;left:-96.69999999999999px;width:800px;text-align:center;">Tên</div><div class="t" style="top:160.00px;font-size:13.5px;line-height:13.5px;font-weight:400;color:#484858;-webkit-text-stroke:0.4px #484858;left:71.5px;width:800px;text-align:center;">Thứ 2 (12/08)</div><div class="t" style="top:196.00px;font-size:12.8px;line-height:12.8px;font-weight:400;color:#484858;-webkit-text-stroke:0.4px #484858;left:33.5px;width:800px;text-align:center;">Sáng</div><div class="t" style="top:195.00px;font-size:13.6px;line-height:13.6px;font-weight:400;color:#484858;-webkit-text-stroke:0.4px #484858;left:111.5px;width:800px;text-align:center;">Chiều</div><div class="t" style="top:160.00px;font-size:13.5px;line-height:13.5px;font-weight:400;color:#484858;-webkit-text-stroke:0.4px #484858;left:232.5px;width:800px;text-align:center;">Thứ 3 (13/08)</div><div class="t" style="top:196.00px;font-size:12.8px;line-height:12.8px;font-weight:400;color:#484858;-webkit-text-stroke:0.4px #484858;left:195.0px;width:800px;text-align:center;">Sáng</div><div class="t" style="top:195.00px;font-size:13.6px;line-height:13.6px;font-weight:400;color:#484858;-webkit-text-stroke:0.4px #484858;left:273.0px;width:800px;text-align:center;">Chiều</div><div class="t" style="top:160.00px;font-size:13.5px;line-height:13.5px;font-weight:400;color:#484858;-webkit-text-stroke:0.4px #484858;left:393.5px;width:800px;text-align:center;">Thứ 4 (14/08)</div><div class="t" style="top:196.00px;font-size:12.8px;line-height:12.8px;font-weight:400;color:#484858;-webkit-text-stroke:0.4px #484858;left:356.0px;width:800px;text-align:center;">Sáng</div><div class="t" style="top:195.00px;font-size:13.6px;line-height:13.6px;font-weight:400;color:#484858;-webkit-text-stroke:0.4px #484858;left:434.0px;width:800px;text-align:center;">Chiều</div><div class="t" style="top:160.00px;font-size:13.5px;line-height:13.5px;font-weight:400;color:#484858;-webkit-text-stroke:0.4px #484858;left:554.0px;width:800px;text-align:center;">Thứ 5 (15/08)</div><div class="t" style="top:196.00px;font-size:12.8px;line-height:12.8px;font-weight:400;color:#484858;-webkit-text-stroke:0.4px #484858;left:516.5px;width:800px;text-align:center;">Sáng</div><div class="t" style="top:195.00px;font-size:13.6px;line-height:13.6px;font-weight:400;color:#484858;-webkit-text-stroke:0.4px #484858;left:594.0px;width:800px;text-align:center;">Chiều</div><div class="t" style="top:160.00px;font-size:13.5px;line-height:13.5px;font-weight:400;color:#484858;-webkit-text-stroke:0.4px #484858;left:714.0px;width:800px;text-align:center;">Thứ 6 (16/08)</div><div class="t" style="top:196.00px;font-size:12.8px;line-height:12.8px;font-weight:400;color:#484858;-webkit-text-stroke:0.4px #484858;left:676.5px;width:800px;text-align:center;">Sáng</div><div class="t" style="top:195.00px;font-size:13.6px;line-height:13.6px;font-weight:400;color:#484858;-webkit-text-stroke:0.4px #484858;left:754.0px;width:800px;text-align:center;">Chiều</div><div class="t" style="top:160.00px;font-size:13.5px;line-height:13.5px;font-weight:400;color:#484858;-webkit-text-stroke:0.4px #484858;left:871.3px;width:800px;text-align:center;">Thứ 7 (17/08)</div><div class="t" style="top:196.00px;font-size:12.8px;line-height:12.8px;font-weight:400;color:#484858;-webkit-text-stroke:0.4px #484858;left:839.0px;width:800px;text-align:center;">Sáng</div><div class="t" style="top:195.00px;font-size:13.6px;line-height:13.6px;font-weight:400;color:#484858;-webkit-text-stroke:0.4px #484858;left:917.5px;width:800px;text-align:center;">Chiều</div><div class="r" style="left:226px;top:183px;width:155px;height:28px;background:#fff;box-sizing:border-box;border:1px solid #dcdde6;border-radius:3px;"></div><svg class="a" style="left:232px;top:189px" width="18" height="18" viewBox="232 189 18 18"><path d="M235.1 192.3 H246.6 L242.6 197.3 V203.2 L239.3 201.1 V197.3 Z" stroke="#51526a" stroke-width="1.25" fill="none" stroke-linejoin="round"/></svg><div class="r" style="left:215px;top:671px;width:1137px;height:33px;background:#d9e0ee;"></div><div class="r" style="left:389px;top:671px;width:1px;height:33px;background:#9a9a9a;"></div><div class="r" style="left:469px;top:671px;width:1px;height:33px;background:#9a9a9a;"></div><div class="r" style="left:550px;top:671px;width:1px;height:33px;background:#9a9a9a;"></div><div class="r" style="left:631px;top:671px;width:1px;height:33px;background:#9a9a9a;"></div><div class="r" style="left:711px;top:671px;width:1px;height:33px;background:#9a9a9a;"></div><div class="r" style="left:792px;top:671px;width:1px;height:33px;background:#9a9a9a;"></div><div class="r" style="left:872px;top:671px;width:1px;height:33px;background:#9a9a9a;"></div><div class="r" style="left:952px;top:671px;width:1px;height:33px;background:#9a9a9a;"></div><div class="r" style="left:1032px;top:671px;width:1px;height:33px;background:#9a9a9a;"></div><div class="r" style="left:1112px;top:671px;width:1px;height:33px;background:#9a9a9a;"></div><div class="r" style="left:1192px;top:671px;width:1px;height:33px;background:#9a9a9a;"></div><div class="r" style="left:1277px;top:671px;width:1px;height:33px;background:#9a9a9a;"></div><div class="r" style="left:1354px;top:671px;width:1px;height:33px;background:#9a9a9a;"></div><div class="r" style="left:1352px;top:671px;width:2px;height:33px;background:#fff;"></div><div class="t" style="top:681.00px;font-size:13.2px;line-height:13.2px;font-weight:400;color:#3a3a48;left:226px;">Tổng:</div><div class="t" style="top:681.00px;font-size:14.4px;line-height:14.4px;font-weight:400;color:#2e2e2e;left:-339.0px;width:800px;text-align:right;">5</div><div class="t" style="top:681.00px;font-size:14.4px;line-height:14.4px;font-weight:400;color:#2e2e2e;left:-258.1px;width:800px;text-align:right;">2</div><div class="t" style="top:681.00px;font-size:14.4px;line-height:14.4px;font-weight:400;color:#2e2e2e;left:-177.10000000000002px;width:800px;text-align:right;">0</div><div class="t" style="top:681.00px;font-size:14.4px;line-height:14.4px;font-weight:400;color:#2e2e2e;left:-97.70000000000005px;width:800px;text-align:right;">0</div><div class="t" style="top:681.00px;font-size:14.4px;line-height:14.4px;font-weight:400;color:#2e2e2e;left:-16.100000000000023px;width:800px;text-align:right;">0</div><div class="t" style="top:681.00px;font-size:14.4px;line-height:14.4px;font-weight:400;color:#2e2e2e;left:63.89999999999998px;width:800px;text-align:right;">0</div><div class="t" style="top:681.00px;font-size:14.4px;line-height:14.4px;font-weight:400;color:#2e2e2e;left:143.29999999999995px;width:800px;text-align:right;">0</div><div class="t" style="top:681.00px;font-size:14.4px;line-height:14.4px;font-weight:400;color:#2e2e2e;left:224.20000000000005px;width:800px;text-align:right;">0</div><div class="t" style="top:681.00px;font-size:14.4px;line-height:14.4px;font-weight:400;color:#2e2e2e;left:303.29999999999995px;width:800px;text-align:right;">0</div><div class="t" style="top:682.00px;font-size:14.4px;line-height:14.4px;font-weight:400;color:#2e2e2e;left:384.9000000000001px;width:800px;text-align:right;">0</div><div class="t" style="top:682.00px;font-size:14.4px;line-height:14.4px;font-weight:400;color:#2e2e2e;left:467.70000000000005px;width:800px;text-align:right;">0</div><div class="t" style="top:681.00px;font-size:14.4px;line-height:14.4px;font-weight:400;color:#2e2e2e;left:547.3px;width:800px;text-align:right;">0</div><div class="r" style="left:1242px;top:715px;width:96px;height:32px;background:#05ad66;border-radius:4px;"></div><div class="t" style="top:726.00px;font-size:12.2px;line-height:12.2px;font-weight:700;color:#fff;left:890px;width:800px;text-align:center;">Lưu</div><div style="position:absolute;left:0;top:0;width:1368px;height:770px;box-sizing:border-box;border:1px solid #000;z-index:50"></div>
</body></html>
